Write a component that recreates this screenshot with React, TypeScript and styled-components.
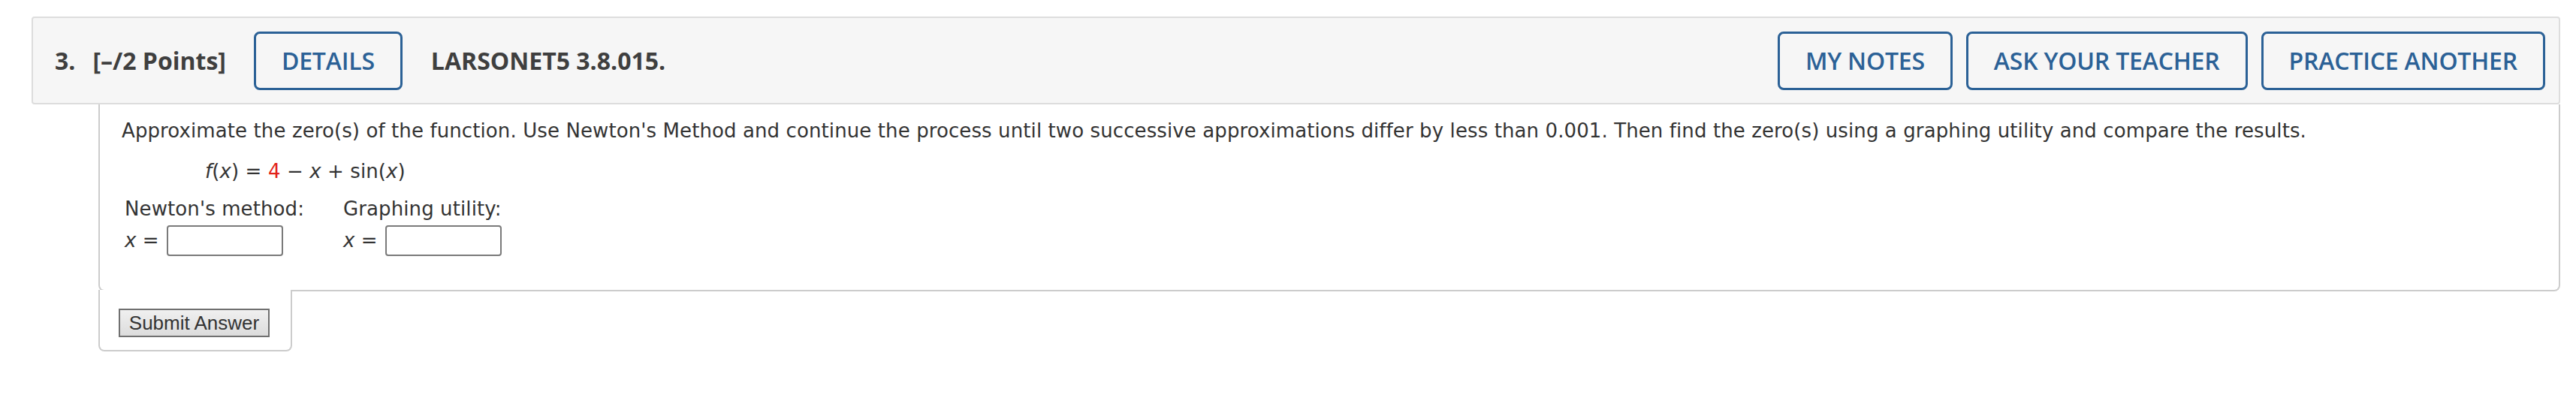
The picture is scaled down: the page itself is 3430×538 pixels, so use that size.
import React from "react";
import styled, { createGlobalStyle } from "styled-components";

const GlobalStyle = createGlobalStyle`
  html, body {
    margin: 0;
    padding: 0;
    background: #ffffff;
  }
  body {
    font-family: "DejaVu Sans", Verdana, sans-serif;
    color: #333333;
  }
`;

const Page = styled.div`
  padding: 22px 21px 0 42px;
`;

const Header = styled.header`
  display: flex;
  align-items: center;
  height: 113px;
  padding: 0 18px 0 29px;
  background: #f6f6f6;
  border: 2px solid #dddddd;
  border-radius: 4px;
  font-family: "Open Sans", "Liberation Sans", sans-serif;
  color: #3f3f3f;
`;

const Title = styled.span`
  font-size: 32px;
  font-weight: 700;
  white-space: nowrap;
  & + & {
    margin-left: 23px;
  }
`;

const Code = styled.span`
  font-size: 32px;
  font-weight: 700;
  margin-left: 38px;
`;

const Spacer = styled.div`
  flex: 1;
`;

const OutlineButton = styled.button<{ $first?: boolean }>`
  height: 78px;
  padding: 0 34px;
  margin-left: ${(p) => (p.$first ? "37px" : "18px")};
  background: transparent;
  border: 3px solid #2b6196;
  border-radius: 8px;
  color: #2b6196;
  font-family: "Open Sans", "Liberation Sans", sans-serif;
  font-size: 32px;
  font-weight: 600;
  letter-spacing: -0.2px;
  white-space: nowrap;
  cursor: pointer;
`;

const Body = styled.div`
  margin-left: 89px;
`;

const Question = styled.section`
  padding: 16px 29px 45px 29px;
  border: 2px solid #cccccc;
  border-top: none;
  border-radius: 0 0 8px 8px;
  font-size: 26px;
  line-height: 39px;
  letter-spacing: 0.1px;
`;

const Prompt = styled.p`
  margin: 0 0 15px 0;
  white-space: nowrap;
`;

const Formula = styled.p`
  margin: 0 0 11px 111px;
  white-space: nowrap;
  i {
    font-style: italic;
  }
`;

const Given = styled.span`
  color: #e2231a;
`;

const AnswerTable = styled.div`
  display: grid;
  grid-template-columns: 291px auto;
  row-gap: 2px;
  padding-left: 4px;
`;

const AnswerLabel = styled.div`
  white-space: nowrap;
`;

const AnswerCell = styled.div`
  display: flex;
  align-items: center;
  gap: 10px;
  i {
    font-style: italic;
  }
`;

const AnswerInput = styled.input`
  box-sizing: border-box;
  width: 155px;
  height: 41px;
  border: 2px solid #7a7a7a;
  border-radius: 4px;
  background: #ffffff;
`;

const SubmitBox = styled.div`
  position: relative;
  width: 204px;
  margin-top: -2px;
  padding: 25px 25px 17px 25px;
  background: #ffffff;
  border: 2px solid #cccccc;
  border-top: none;
  border-radius: 0 0 8px 8px;
`;

const SubmitButton = styled.button`
  box-sizing: border-box;
  width: 201px;
  height: 38px;
  padding: 0;
  border: 2px solid #707070;
  background: linear-gradient(#f0f0f0, #dcdcdc);
  font-family: "Liberation Sans", Arial, sans-serif;
  font-size: 26px;
  color: #333333;
  cursor: pointer;
`;

export default function App() {
  return (
    <>
      <GlobalStyle />
      <Page>
        <Header>
          <Title>3.</Title>
          <Title>[–/2 Points]</Title>
          <OutlineButton $first>DETAILS</OutlineButton>
          <Code>LARSONET5 3.8.015.</Code>
          <Spacer />
          <OutlineButton>MY NOTES</OutlineButton>
          <OutlineButton>ASK YOUR TEACHER</OutlineButton>
          <OutlineButton>PRACTICE ANOTHER</OutlineButton>
        </Header>
        <Body>
          <Question>
            <Prompt>
              Approximate the zero(s) of the function. Use Newton's Method and
              continue the process until two successive approximations differ
              by less than 0.001. Then find the zero(s) using a graphing utility
              and compare the results.
            </Prompt>
            <Formula>
              <i>f</i>(<i>x</i>) = <Given>4</Given> − <i>x</i> + sin(<i>x</i>)
            </Formula>
            <AnswerTable>
              <AnswerLabel>Newton's method:</AnswerLabel>
              <AnswerLabel>Graphing utility:</AnswerLabel>
              <AnswerCell>
                <span>
                  <i>x</i> =
                </span>
                <AnswerInput type="text" />
              </AnswerCell>
              <AnswerCell>
                <span>
                  <i>x</i> =
                </span>
                <AnswerInput type="text" />
              </AnswerCell>
            </AnswerTable>
          </Question>
          <SubmitBox>
            <SubmitButton>Submit Answer</SubmitButton>
          </SubmitBox>
        </Body>
      </Page>
    </>
  );
}
